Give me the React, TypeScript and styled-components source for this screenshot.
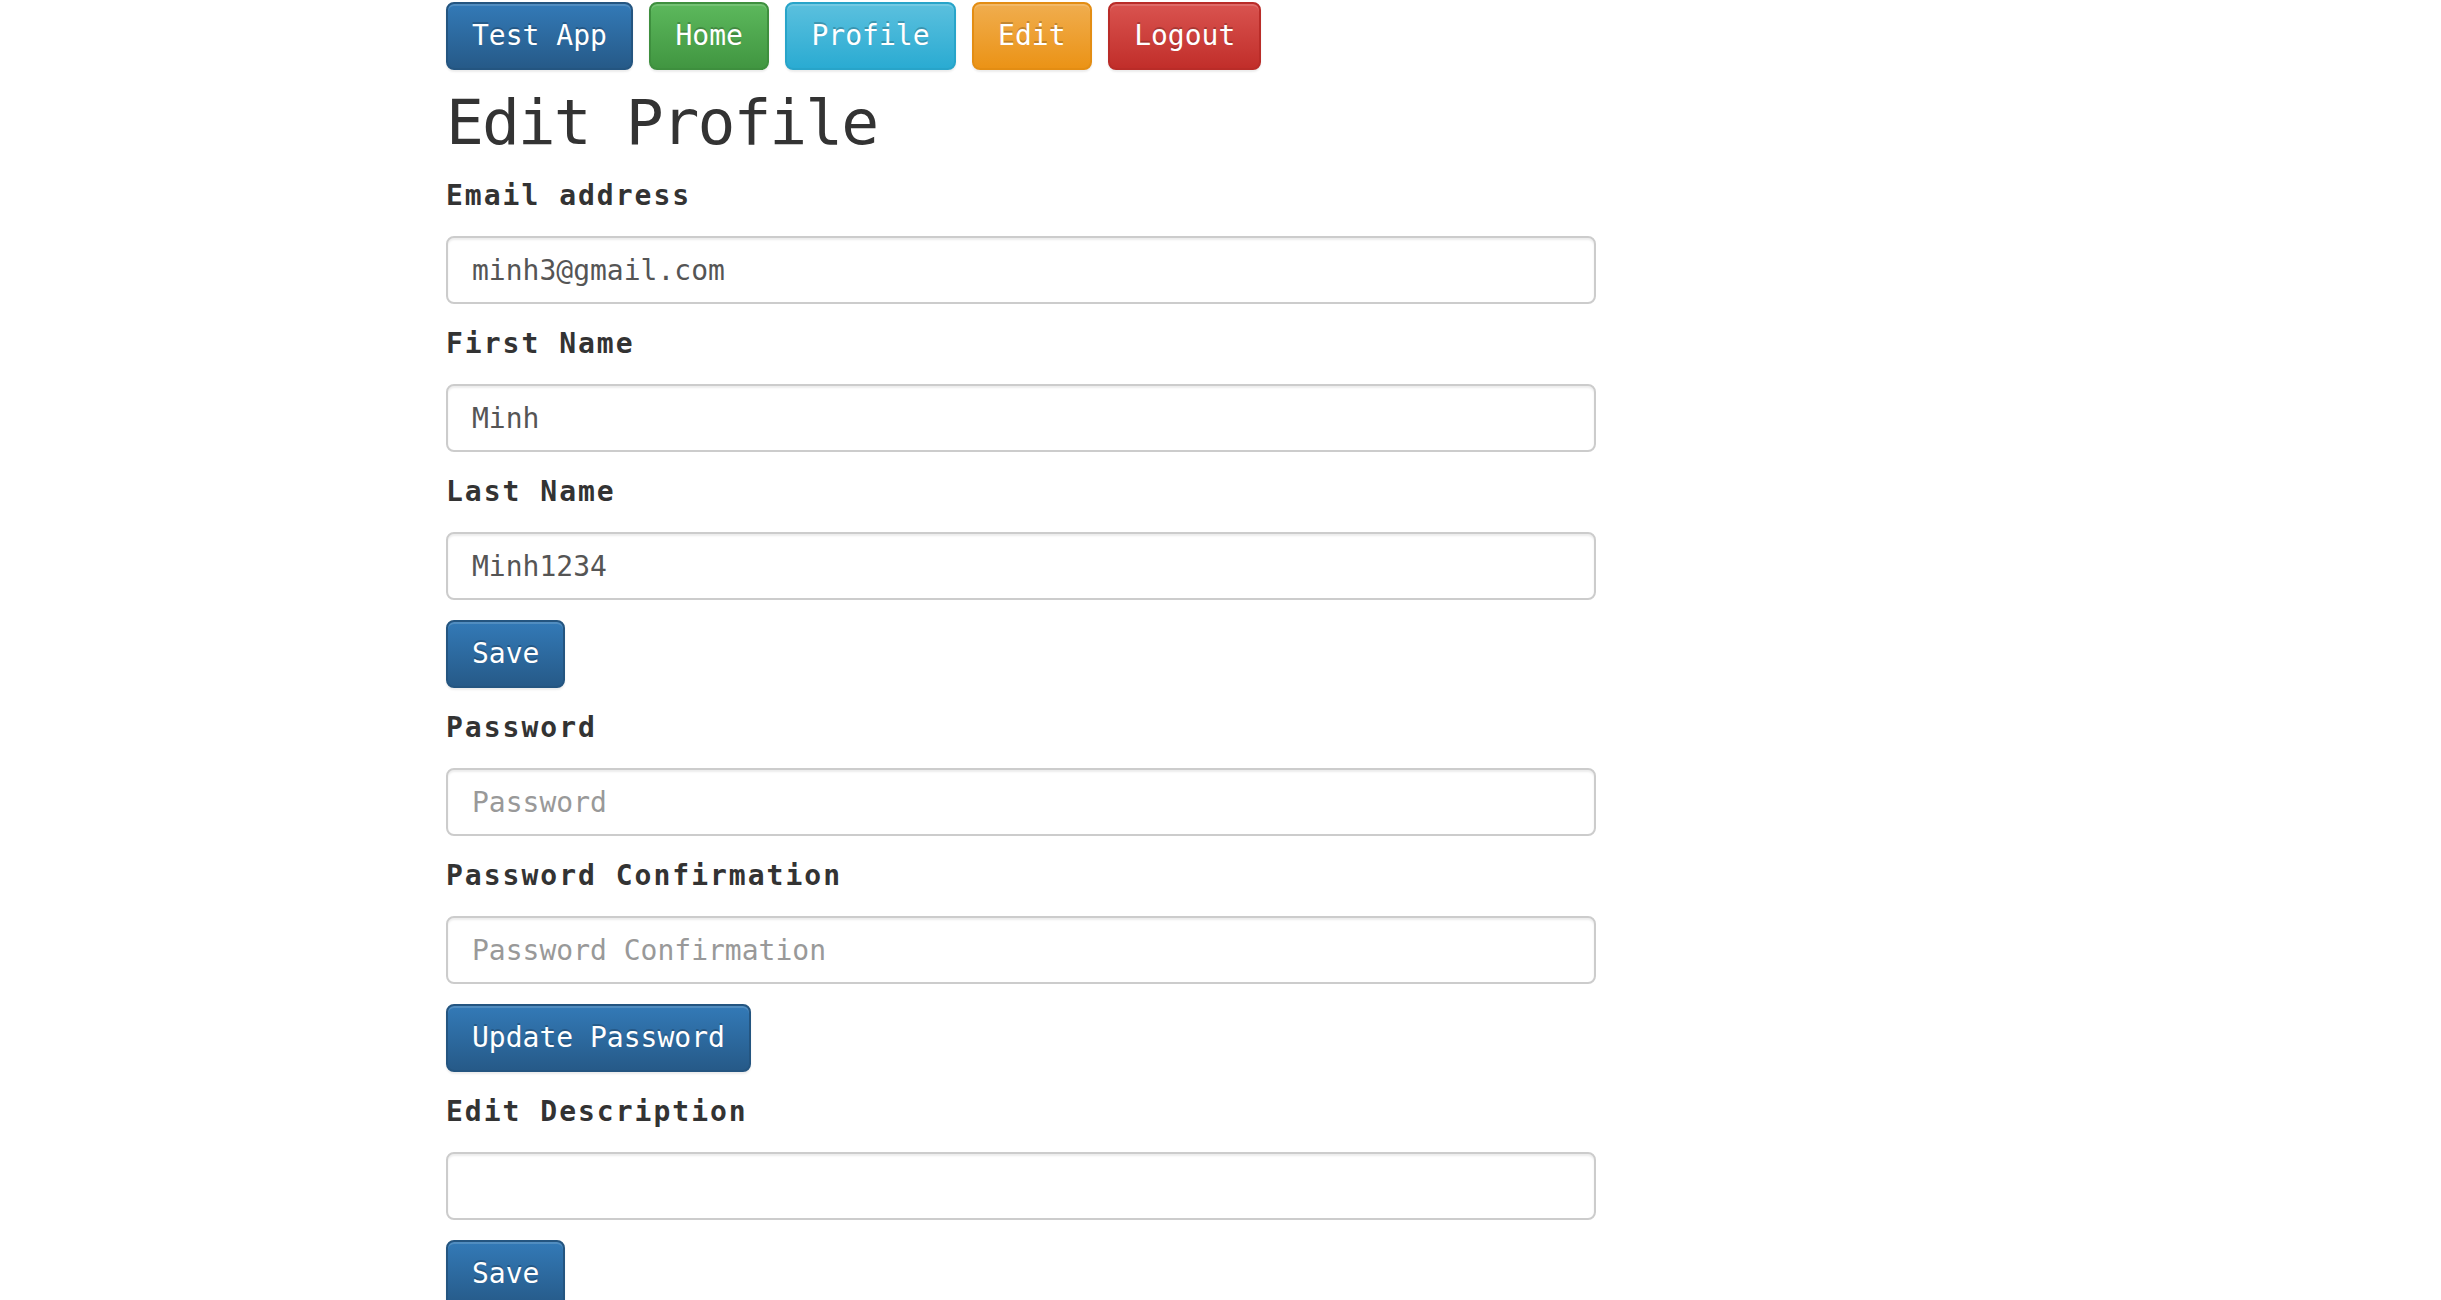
import React from "react";
import styled, { createGlobalStyle, css } from "styled-components";

const GlobalStyle = createGlobalStyle`
  html, body {
    margin: 0;
    padding: 0;
    background: #ffffff;
  }
  body {
    font-family: "DejaVu Sans Mono", "Liberation Mono", monospace;
    font-size: 28px;
    line-height: 40px;
    color: #333333;
  }
  * { box-sizing: border-box; }
`;

type Variant = "primary" | "success" | "info" | "warning" | "danger";

const variants: Record<Variant, { from: string; to: string; border: string }> = {
  primary: { from: "#337ab7", to: "#265a88", border: "#245580" },
  success: { from: "#5cb85c", to: "#419641", border: "#3e8f3e" },
  info: { from: "#5bc0de", to: "#2aabd2", border: "#28a4c9" },
  warning: { from: "#f0ad4e", to: "#eb9316", border: "#e38d13" },
  danger: { from: "#d9534f", to: "#c12e2a", border: "#b92c28" },
};

const Page = styled.div`
  padding: 2px 0 40px 446px;
  width: 1596px;
`;

const Nav = styled.nav`
  display: flex;
  gap: 16.6px;
`;

const Button = styled.button<{ $variant: Variant }>`
  align-self: flex-start;
  display: inline-block;
  height: 68px;
  padding: 12px 24px;
  border-width: 2px;
  border-style: solid;
  border-radius: 8px;
  font-family: "DejaVu Sans Mono", "Liberation Mono", monospace;
  font-size: 28px;
  line-height: 40px;
  font-weight: normal;
  color: #ffffff;
  white-space: nowrap;
  cursor: pointer;
  text-shadow: 0 -2px 0 rgba(0, 0, 0, 0.2);
  box-shadow: inset 0 2px 0 rgba(255, 255, 255, 0.15), 0 2px 2px rgba(0, 0, 0, 0.075);
  ${({ $variant }) => css`
    background-image: linear-gradient(to bottom, ${variants[$variant].from} 0%, ${variants[$variant].to} 100%);
    border-color: ${variants[$variant].border};
  `}
`;

const Heading = styled.h1`
  margin: 20px 0 20px;
  font-family: "DejaVu Sans Mono", "Liberation Mono", monospace;
  font-size: 63px;
  line-height: 66px;
  letter-spacing: -2px;
  font-weight: normal;
  color: #333333;
`;

const Form = styled.form`
  display: flex;
  flex-direction: column;
  gap: 20px;
  width: 1150px;
`;

const Field = styled.div`
  display: flex;
  flex-direction: column;
`;

const Label = styled.label`
  display: block;
  margin-bottom: 20px;
  font-size: 28px;
  line-height: 40px;
  font-weight: bold;
  letter-spacing: 2px;
  color: #333333;
`;

const Input = styled.input`
  display: block;
  width: 100%;
  height: 68px;
  padding: 0 24px;
  border: 2px solid #cccccc;
  border-radius: 8px;
  background: #ffffff;
  font-family: "DejaVu Sans Mono", "Liberation Mono", monospace;
  font-size: 28px;
  line-height: 40px;
  color: #555555;
  box-shadow: inset 0 2px 2px rgba(0, 0, 0, 0.075);
  outline: none;
  &::placeholder {
    color: #999999;
    opacity: 1;
  }
`;

type FieldDef = { id: string; label: string; value?: string; placeholder?: string; type?: string };

const FormField: React.FC<FieldDef> = ({ id, label, value, placeholder, type }) => (
  <Field>
    <Label htmlFor={id}>{label}</Label>
    <Input id={id} type={type ?? "text"} defaultValue={value} placeholder={placeholder} />
  </Field>
);

const navItems: { label: string; variant: Variant }[] = [
  { label: "Test App", variant: "primary" },
  { label: "Home", variant: "success" },
  { label: "Profile", variant: "info" },
  { label: "Edit", variant: "warning" },
  { label: "Logout", variant: "danger" },
];

export default function App() {
  return (
    <>
      <GlobalStyle />
      <Page>
        <Nav>
          {navItems.map((item) => (
            <Button key={item.label} type="button" $variant={item.variant}>
              {item.label}
            </Button>
          ))}
        </Nav>
        <Heading>Edit Profile</Heading>
        <Form onSubmit={(e) => e.preventDefault()}>
          <FormField id="email" label="Email address" value="minh3@gmail.com" type="email" />
          <FormField id="first" label="First Name" value="Minh" />
          <FormField id="last" label="Last Name" value="Minh1234" />
          <Button type="button" $variant="primary">Save</Button>
          <FormField id="pw" label="Password" placeholder="Password" type="password" />
          <FormField id="pwc" label="Password Confirmation" placeholder="Password Confirmation" type="password" />
          <Button type="button" $variant="primary">Update Password</Button>
          <FormField id="desc" label="Edit Description" />
          <Button type="button" $variant="primary">Save</Button>
        </Form>
      </Page>
    </>
  );
}
